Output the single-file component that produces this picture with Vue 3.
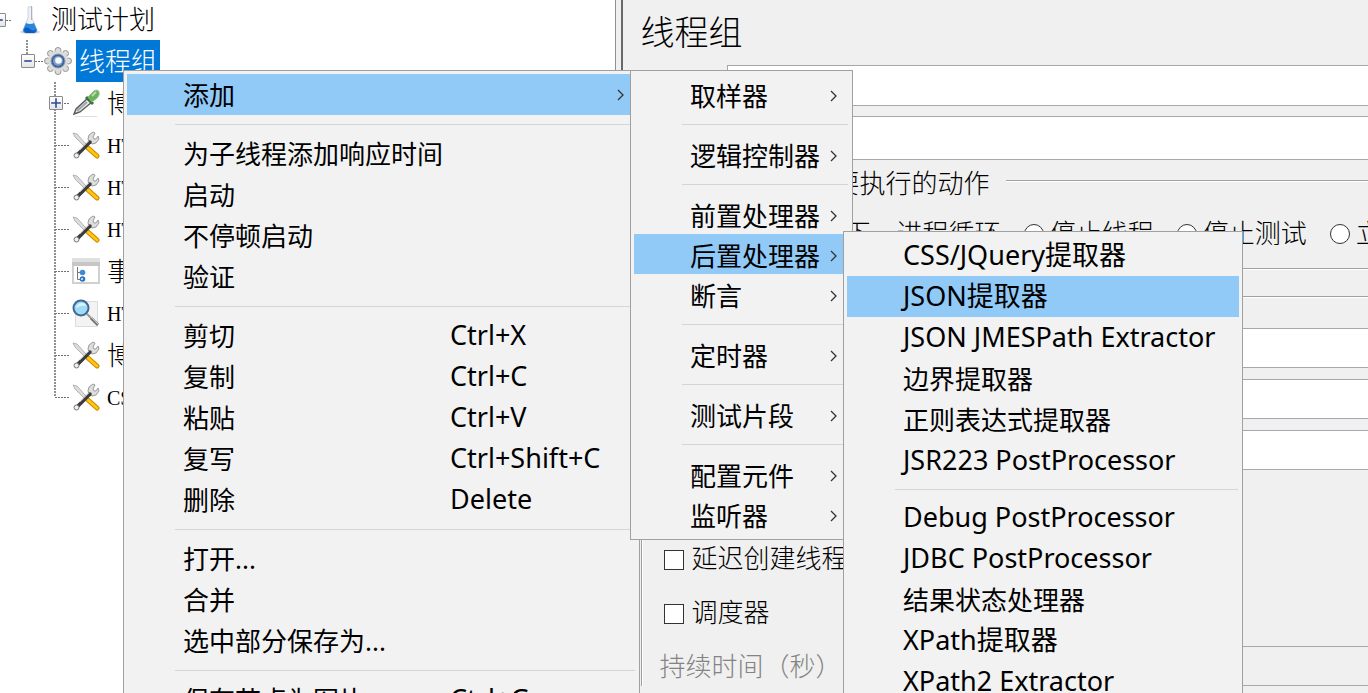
<script setup>
const children = [
  { icon: 'dropper', text: '博客', expandable: true },
  { icon: 'tools', text: 'HTTP', latin: true },
  { icon: 'tools', text: 'HTTP', latin: true },
  { icon: 'tools', text: 'HTTP', latin: true },
  { icon: 'window', text: '事务' },
  { icon: 'search', text: 'HTTP', latin: true },
  { icon: 'tools', text: '博客' },
  { icon: 'tools', text: 'CSV', latin: true },
]

const mainMenu = [
  { label: '添加', sub: true, active: true },
  { sep: true },
  { label: '为子线程添加响应时间' },
  { label: '启动' },
  { label: '不停顿启动' },
  { label: '验证' },
  { sep: true },
  { label: '剪切', key: 'Ctrl+X' },
  { label: '复制', key: 'Ctrl+C' },
  { label: '粘贴', key: 'Ctrl+V' },
  { label: '复写', key: 'Ctrl+Shift+C' },
  { label: '删除', key: 'Delete' },
  { sep: true },
  { label: '打开...' },
  { label: '合并' },
  { label: '选中部分保存为...' },
  { sep: true },
  { label: '保存节点为图片', key: 'Ctrl+G' },
]

const addMenu = [
  { label: '取样器', sub: true },
  { sep: true },
  { label: '逻辑控制器', sub: true },
  { sep: true },
  { label: '前置处理器', sub: true },
  { label: '后置处理器', sub: true, active: true },
  { label: '断言', sub: true },
  { sep: true },
  { label: '定时器', sub: true },
  { sep: true },
  { label: '测试片段', sub: true },
  { sep: true },
  { label: '配置元件', sub: true },
  { label: '监听器', sub: true },
]

const postMenu = [
  { label: 'CSS/JQuery提取器' },
  { label: 'JSON提取器', active: true },
  { label: 'JSON JMESPath Extractor' },
  { label: '边界提取器' },
  { label: '正则表达式提取器' },
  { label: 'JSR223 PostProcessor' },
  { sep: true },
  { label: 'Debug PostProcessor' },
  { label: 'JDBC PostProcessor' },
  { label: '结果状态处理器' },
  { label: 'XPath提取器' },
  { label: 'XPath2 Extractor' },
]

const menus = [
  { name: 'main', items: mainMenu },
  { name: 'add', items: addMenu },
  { name: 'post', items: postMenu },
]

const hasLatin = (s) => /[A-Z]/.test(s)

const actions = ['继续', '启动下一进程循环', '停止线程', '停止测试', '立即停止测试']
</script>

<template>
  <div class="app">
    <nav class="tree">
      <div class="node root">
        <button class="toggle" aria-label="折叠">
          <svg viewBox="0 0 13 13"><path d="M3 6.5h7" /></svg>
        </button>
        <i class="dash"></i>
        <svg class="icon" viewBox="0 0 28 28">
          <ellipse cx="14" cy="26" rx="10" ry="1.800" fill="#d4d4d8" />
          <path d="M12 1h4v11l5 12q0 3-3 3h-8q-3 0-3-3l5-12z" fill="#eef1f5" stroke="#d0d4da" />
          <path d="M10 17q4 2 8 0l3 7q0 3-3 3h-8q-3 0-3-3z" fill="#2a85e0" />
          <path d="M8 23q3-3 6 0t6 0q0 4-3 4h-6q-3 0-3-4z" fill="#0a5cc0" />
          <path d="M15.500 0v14" stroke="#aab3bf" fill="none" />
        </svg>
        <span class="text">测试计划</span>
      </div>
      <div class="node group">
        <button class="toggle" aria-label="折叠">
          <svg viewBox="0 0 13 13"><path d="M3 6.5h7" /></svg>
        </button>
        <i class="dash"></i>
        <svg class="icon" viewBox="0 0 28 28">
          <g fill="#dcdcdc" stroke="#969696">
            <circle cx="14" cy="3.500" r="3" /><circle cx="21.500" cy="6.500" r="3" />
            <circle cx="24.500" cy="14" r="3" /><circle cx="21.500" cy="21.500" r="3" />
            <circle cx="14" cy="24.500" r="3" /><circle cx="6.500" cy="21.500" r="3" />
            <circle cx="3.500" cy="14" r="3" /><circle cx="6.500" cy="6.500" r="3" />
          </g>
          <circle cx="14" cy="14" r="10" fill="#dcdcdc" />
          <circle cx="14" cy="14" r="7" fill="#3c5f94" stroke="#8c9cb4" />
          <circle cx="14" cy="14" r="5" fill="#7c9cc8" />
          <circle cx="14.500" cy="13.500" r="3.300" fill="#f4f7fb" />
        </svg>
        <span class="text selected">线程组</span>
      </div>
      <ul class="children">
        <li v-for="(n, i) in children" :key="i" class="node child">
          <button v-if="n.expandable" class="toggle" aria-label="展开">
            <svg viewBox="0 0 13 13"><path d="M2 6.5h9M6.500 2v9" /></svg>
          </button>
          <i class="dash"></i>
          <svg v-if="n.icon === 'dropper'" class="icon" viewBox="0 0 28 28">
            <path d="M3 27.500h22" stroke="#dedede" />
            <path d="M2 25l2-5L16 9l4 4L8 23z" fill="#e8eaea" stroke="#565a5c" stroke-width="1.400" />
            <path d="M5 22l10-9" stroke="#a0a6a8" stroke-width="2" />
            <path d="M14 8l7 7" stroke="#3f6f3f" stroke-width="3" />
            <path d="M16 8l6-6q4-2 5 1t-2 6l-5 4z" fill="#69b35b" stroke="#8dbd83" />
            <path d="M20 7l4-4" stroke="#b5dea9" stroke-width="2" />
          </svg>
          <svg v-else-if="n.icon === 'tools'" class="icon" viewBox="0 0 28 28">
            <path d="M1 2l4 1 9 10-2 2L3 6z" fill="#dcdcdc" stroke="#b4b4b4" />
            <path d="M16 17l9 8" stroke="#c98800" stroke-width="5" stroke-linecap="round" />
            <path d="M16 17l9 8" stroke="#ffc60c" stroke-width="3" stroke-linecap="round" />
            <path d="M17 11l-1-3 1-4 4-3 2 1-2 4 1 2 2 0 2-3 1 3-3 4-4 1z" fill="#dedede" stroke="#9b9b9b" />
            <path d="M6 23L18 11" stroke="#3c3c3c" stroke-width="3.500" stroke-linecap="round" />
            <path d="M8 19l9-9" stroke="#a8a8a8" />
            <circle cx="4.500" cy="24.500" r="2.500" fill="#eee" stroke="#777" />
          </svg>
          <svg v-else-if="n.icon === 'window'" class="icon" viewBox="0 0 28 28">
            <path d="M1 2h26v24H1z" fill="#fff" stroke="#d0d0d0" stroke-width="2" />
            <path d="M0 1h28v8H0z" fill="#c6c6c6" />
            <path d="M0 1h28v4H0z" fill="#e0e0e0" />
            <path d="M5.500 10v12.500H9M5.500 15.500H9" fill="none" stroke="#777" />
            <circle cx="10.500" cy="15.500" r="2.800" fill="#3f88d4" />
            <circle cx="10.500" cy="22" r="2.800" fill="#2b74c6" />
            <circle cx="10" cy="22" r="1" fill="#e6f3ff" />
          </svg>
          <svg v-else class="icon" viewBox="0 0 28 28">
            <path d="M3.500 2.500h22v25h-22z" fill="#f3f3f3" stroke="#dcdcdc" />
            <path d="M15 15l6 6" stroke="#999" stroke-width="2" />
            <path d="M19 19l7 7" stroke="#777" stroke-width="3" />
            <path d="M19 18l8 8" stroke="#ccc" />
            <circle cx="9" cy="9" r="7.500" fill="#9ddbf7" stroke="#42688f" stroke-width="2" />
            <path d="M4 9q1-5 6-5 4 0 4 3-5-1-10 2z" fill="#d9f3fd" />
          </svg>
          <span class="text" :class="{ latin: n.latin }">{{ n.text }}</span>
        </li>
      </ul>
    </nav>

    <main class="panel">
      <h1>线程组</h1>
      <input class="field name" aria-label="名称" />
      <input class="field notes" aria-label="注释" />

      <section class="box actions">
        <div class="legend"><span>在取样器错误后要执行的动作</span></div>
        <div class="radios">
          <label v-for="a in actions" :key="a">
            <input type="radio" name="action" /><span>{{ a }}</span>
          </label>
        </div>
      </section>

      <section class="box props">
        <div class="legend"></div>
        <div class="stack">
          <input class="field" aria-label="线程数" />
          <input class="field" aria-label="Ramp-Up时间" />
          <input class="field" aria-label="循环次数" />
        </div>
        <label class="check delay"><input type="checkbox" /><span>延迟创建线程直到需要</span></label>
        <label class="check"><input type="checkbox" /><span>调度器</span></label>
        <div class="duration">
          <label for="duration">持续时间（秒）</label>
          <input id="duration" class="field" disabled />
        </div>
      </section>
    </main>

    <ul v-for="m in menus" :key="m.name" class="menu" :class="m.name" role="menu">
      <template v-for="(it, i) in m.items" :key="i">
        <li v-if="it.sep" class="sep" role="separator"></li>
        <li v-else role="none">
          <button class="item" :class="{ active: it.active }" role="menuitem">
            <span class="label" :class="{ latin: hasLatin(it.label) }">{{ it.label }}</span>
            <span v-if="it.key" class="key">{{ it.key }}</span>
            <svg v-if="it.sub" class="arrow" viewBox="0 0 8 12"><path d="M1 1l5 5-5 5" /></svg>
          </button>
        </li>
      </template>
    </ul>
  </div>
</template>

<style>
body {
  margin: 0;
}
</style>

<style scoped>
* {
  box-sizing: border-box;
}

.app {
  position: relative;
  display: flex;
  height: 100vh;
  overflow: hidden;
  background: #f0f0f0;
  color: #000;
  font: 300 26px/40px "Liberation Serif", "Noto Sans CJK SC", serif;
}

ul {
  margin: 0;
  padding: 0;
  list-style: none;
}

button {
  font: inherit;
  color: inherit;
}

.tree {
  flex: 0 0 45%;
  background: #fff;
  border-right: 1px solid #8c8f94;
  overflow: hidden;
}

.node {
  position: relative;
  display: flex;
  align-items: center;
  height: 42px;
  white-space: nowrap;
}

.root {
  height: 40px;
  padding-left: 16px;
}

.group {
  padding-left: 44px;
}

.child {
  padding-left: 72px;
}

.icon {
  flex: none;
  width: 28px;
  height: 28px;
}

.text {
  margin-left: 4px;
  padding: 3px 3px 0;
  line-height: 39px;
}

.root .text {
  padding-top: 0;
}

.text.latin {
  font-size: 20px;
}

.selected {
  background: #0078d7;
  color: #fff;
}

.toggle {
  position: absolute;
  z-index: 1;
  width: 14px;
  height: 14px;
  padding: 0;
  border: 1px solid #8a8a8a;
  border-radius: 1px;
  background: linear-gradient(#fff, #e4e4e4);
}

.toggle svg {
  position: absolute;
  inset: -1px;
  width: 14px;
  height: 14px;
  stroke: #2b4b9b;
  stroke-width: 1.5;
}

.root .toggle {
  left: -8px;
}

.group .toggle {
  left: 21px;
}

.child .toggle {
  left: 49px;
}

.dash {
  position: absolute;
  height: 1px;
  background: repeating-linear-gradient(90deg, #707070 0 2px, transparent 2px 3px);
}

.root .dash {
  left: 6px;
  width: 6px;
}

.group .dash {
  left: 35px;
  width: 8px;
}

.child .dash {
  left: 55px;
  width: 14px;
}

.group::before,
.child::before {
  content: "";
  position: absolute;
  top: 0;
  width: 2px;
  height: 42px;
  background: repeating-linear-gradient(#909090 0 2px, transparent 2px 3px);
}

.group::before {
  left: 26px;
  height: 15px;
}

.child::before {
  left: 54px;
}

.child:last-child::before {
  height: 21px;
}

.panel {
  flex: 1;
  min-width: 0;
  margin-left: 5px;
  padding-left: 18px;
  border-left: 2px solid #696969;
}

h1 {
  margin: 0;
  padding-top: 3px;
  height: 65px;
  font-size: 34px;
  font-weight: 300;
  line-height: 62px;
}

.field {
  display: block;
  width: 100%;
  height: 40px;
  border: 1px solid #a6a8ad;
  border-right: 0;
  background: #fff;
}

.name,
.notes {
  width: auto;
  min-width: calc(100% - 86px);
  margin-left: 86px;
}

.name {
  height: 41px;
}

.notes {
  height: 44px;
  margin-top: 10px;
}

.box {
  border-left: 1px solid #a0a0a0;
  box-shadow: inset 1px 0 #fff;
}

.legend {
  display: flex;
  align-items: center;
  gap: 16px;
  height: 42px;
  padding-left: 10px;
  white-space: nowrap;
}

.legend span {
  padding-top: 7px;
}

.legend::after {
  content: "";
  flex: 1;
  height: 1px;
  background: #a0a0a0;
  border-bottom: 1px solid #fff;
}

.actions {
  height: 109px;
  border-bottom: 1px solid #a0a0a0;
  box-shadow: 0 1px #fff;
  overflow: hidden;
}

.radios {
  display: flex;
  gap: 23px;
  padding: 12px 0 0 24px;
  white-space: nowrap;
}

.radios label,
.check {
  display: flex;
  flex: none;
  align-items: center;
  gap: 6px;
  height: 40px;
}

.radios span {
  padding-top: 2px;
}

input[type="radio"],
input[type="checkbox"] {
  appearance: none;
  width: 20px;
  height: 20px;
  margin: 0;
  border: 1px solid #333;
  background: #fff;
}

input[type="radio"] {
  border-radius: 50%;
}

.props {
  margin-top: 7px;
}

.props .legend {
  padding-left: 0;
}

.stack {
  display: grid;
  gap: 11px;
  padding: 10px 0 0 190px;
}

.check {
  gap: 8px;
  margin-top: 14px;
  padding-left: 22px;
}

.check.delay {
  margin-top: 70px;
}

.duration {
  display: flex;
  align-items: center;
  gap: 16px;
  height: 40px;
  margin-top: 12px;
  padding-left: 18px;
  color: #838383;
  white-space: nowrap;
}

.duration label {
  padding-top: 4px;
}

.duration .field {
  flex: 1;
  background: #f0f0f0;
}

.menu {
  position: absolute;
  padding: 3px;
  border: 1px solid #a0a0a0;
  background: #f2f2f2;
  font: 400 26px/40px "Noto Sans", "Noto Sans CJK SC", sans-serif;
}

.menu.main {
  left: 123px;
  top: 70px;
  width: 517px;
}

.menu.add {
  left: 630px;
  top: 70px;
  width: 223px;
  padding-bottom: 5px;
}

.menu.post {
  left: 843px;
  top: 231px;
  width: 400px;
}

.item {
  display: flex;
  align-items: center;
  width: 100%;
  height: 41px;
  padding: 0 11px 0 56px;
  border: 0;
  background: transparent;
  text-align: left;
  white-space: nowrap;
}

.item.active {
  background: #91c9f7;
}

.label {
  flex: 1;
}

.label.latin,
.key {
  padding-bottom: 2px;
  font-size: 27px;
}

.key {
  flex: 0 0 175px;
}

.arrow {
  width: 8px;
  height: 12px;
  fill: none;
  stroke: #333;
  stroke-width: 1.3;
}

.sep {
  height: 18px;
  padding: 9px 1px 0 48px;
}

.sep::before {
  content: "";
  display: block;
  height: 1px;
  background: #d5d5d5;
}

.add .item {
  height: 40px;
  padding-top: 3px;
}

.add .sep {
  height: 20px;
  padding-top: 10px;
}

.post .sep {
  height: 16px;
  padding-top: 8px;
}
</style>
